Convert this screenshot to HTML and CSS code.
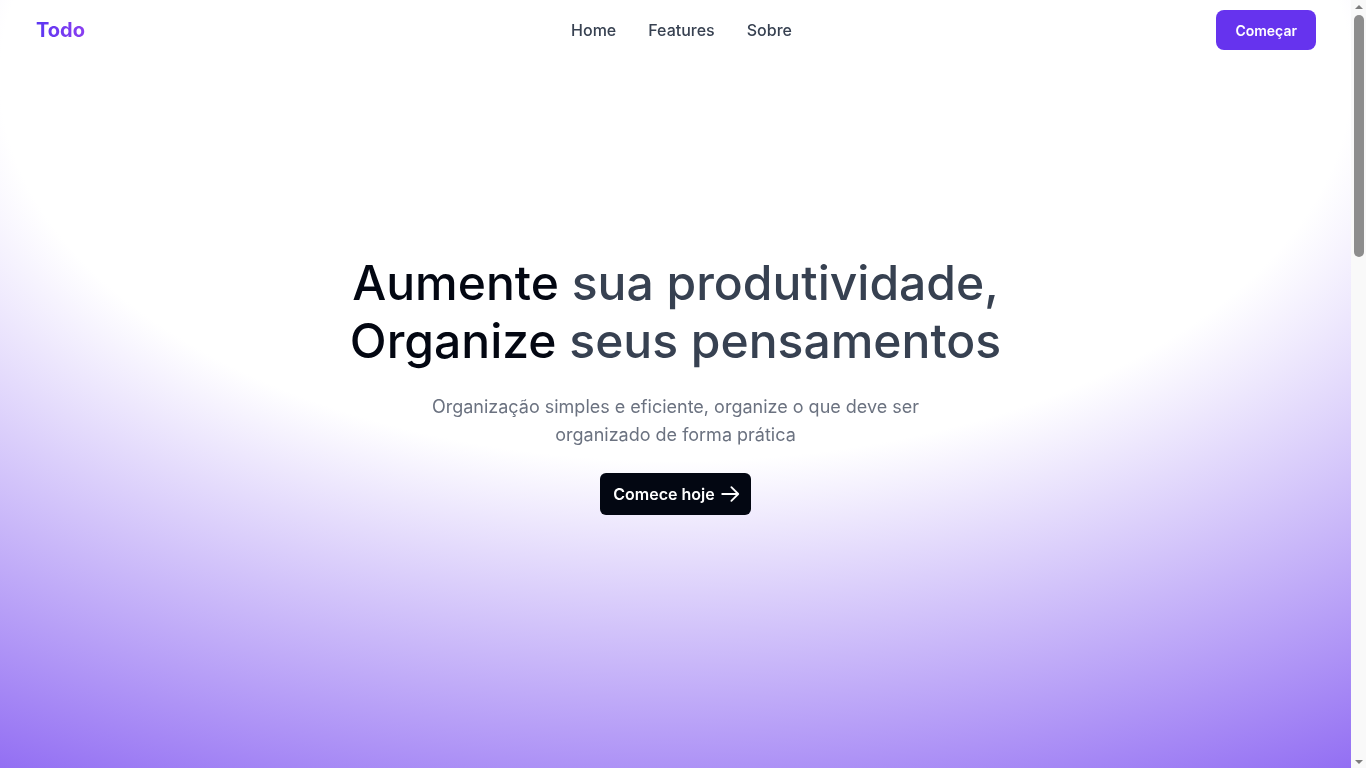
FILE: index.html
```html
<!DOCTYPE html>
<html lang="pt-BR">
<head>
<meta charset="utf-8">
<title>Todo</title>
<link rel="stylesheet" href="styles.css">
</head>
<body>
<div class="bg"></div>
<header class="topbar">
  <a class="logo" href="#">Todo</a>
  <nav class="nav">
    <a href="#">Home</a>
    <a href="#features">Features</a>
    <a href="#sobre">Sobre</a>
  </nav>
  <div class="actions">
    <a class="btn-start" href="#">Começar</a>
  </div>
</header>
<main>
  <section class="hero">
    <h1 class="title"><span class="dark">Aumente</span> <span class="soft">sua produtividade,</span><br><span class="dark">Organize</span> <span class="soft">seus pensamentos</span></h1>
    <p class="lead">Organização simples e eficiente, organize o que deve ser organizado de forma prática</p>
    <a class="btn-cta" href="#">Comece hoje
      <svg width="24" height="24" viewBox="0 0 24 24" fill="none" stroke="currentColor" stroke-width="2" stroke-linecap="round" stroke-linejoin="round"><path d="M13.5 4.5 21 12l-7.5 7.5M21 12H3.5"/></svg>
    </a>
  </section>
  <section class="section" id="features"></section>
  <section class="section" id="sobre"></section>
</main>
<div class="scrollbar" aria-hidden="true">
  <span class="sb-arrow up"></span>
  <span class="sb-track"><span class="sb-thumb"></span></span>
  <span class="sb-arrow down"></span>
</div>
</body>
</html>
```
FILE: styles.css
```css
* { box-sizing: border-box; }
html, body { margin: 0; padding: 0; }
html { scrollbar-width: none; }
html::-webkit-scrollbar { display: none; }

body {
  margin-right: 15px;
  font-family: Inter, "Noto Sans", "Liberation Sans", sans-serif;
  color: #111827;
}
a { text-decoration: none; }

.bg {
  position: fixed;
  top: 0;
  left: 0;
  bottom: 0;
  right: 15px;
  z-index: -1;
  background: radial-gradient(125% 125% at 50% 10%, #ffffff 40%, #6633ee 100%);
}

/* imitation of the classic browser scrollbar seen in the screenshot */
.scrollbar {
  position: fixed;
  top: 0;
  right: 0;
  bottom: 0;
  width: 15px;
  background: #f9f9f9;
  display: flex;
  flex-direction: column;
}
.sb-arrow {
  height: 13px;
  flex: none;
  display: flex;
  justify-content: center;
  align-items: center;
}
.sb-arrow::before {
  content: "";
  width: 0;
  height: 0;
  border-left: 4px solid transparent;
  border-right: 4px solid transparent;
}
.sb-arrow.up::before { border-bottom: 4px solid #7d7d7d; }
.sb-arrow.down::before { border-top: 4px solid #7d7d7d; }
.sb-track {
  flex: 1;
  padding: 2px 2px 0 3px;
}
.sb-thumb {
  display: block;
  height: 242px;
  border-radius: 5px;
  background: #8d8d8d;
}

.topbar {
  height: 60px;
  padding: 0 35px 0 36px;
  display: grid;
  grid-template-columns: 1fr auto 1fr;
  align-items: center;
}
.logo {
  justify-self: start;
  font-size: 20px;
  font-weight: 700;
  background: linear-gradient(to right, #5b36f2, #8a3ef0);
  -webkit-background-clip: text;
  background-clip: text;
  color: transparent;
}
.nav {
  display: flex;
  gap: 32px;
  margin-left: 11px;
}
.nav a {
  font-size: 16px;
  font-weight: 500;
  color: #374151;
}
.actions { justify-self: end; }
.btn-start {
  display: inline-flex;
  align-items: center;
  justify-content: center;
  height: 40px;
  padding: 0 19px;
  border-radius: 8px;
  background: #6633ee;
  color: #fff;
  font-size: 14px;
  font-weight: 600;
}

.hero {
  padding-top: 194px;
  min-height: 708px;
  display: flex;
  flex-direction: column;
  align-items: center;
  text-align: center;
}
.title {
  margin: 0;
  font-size: 48px;
  line-height: 1.2;
  font-weight: 500;
}
.dark { color: #030712; }
.soft { color: #374151; }
.lead {
  margin: 24px 0 0;
  max-width: 512px;
  font-size: 18px;
  line-height: 28px;
  color: #6b7280;
}
.btn-cta {
  margin-top: 24px;
  height: 42px;
  display: inline-flex;
  align-items: center;
  gap: 4px;
  padding: 0 10px 0 13px;
  border-radius: 6px;
  background: #030712;
  color: #fff;
  font-size: 16px;
  font-weight: 600;
}
.btn-cta svg { width: 22px; height: 22px; }

.section { min-height: 790px; }
```
